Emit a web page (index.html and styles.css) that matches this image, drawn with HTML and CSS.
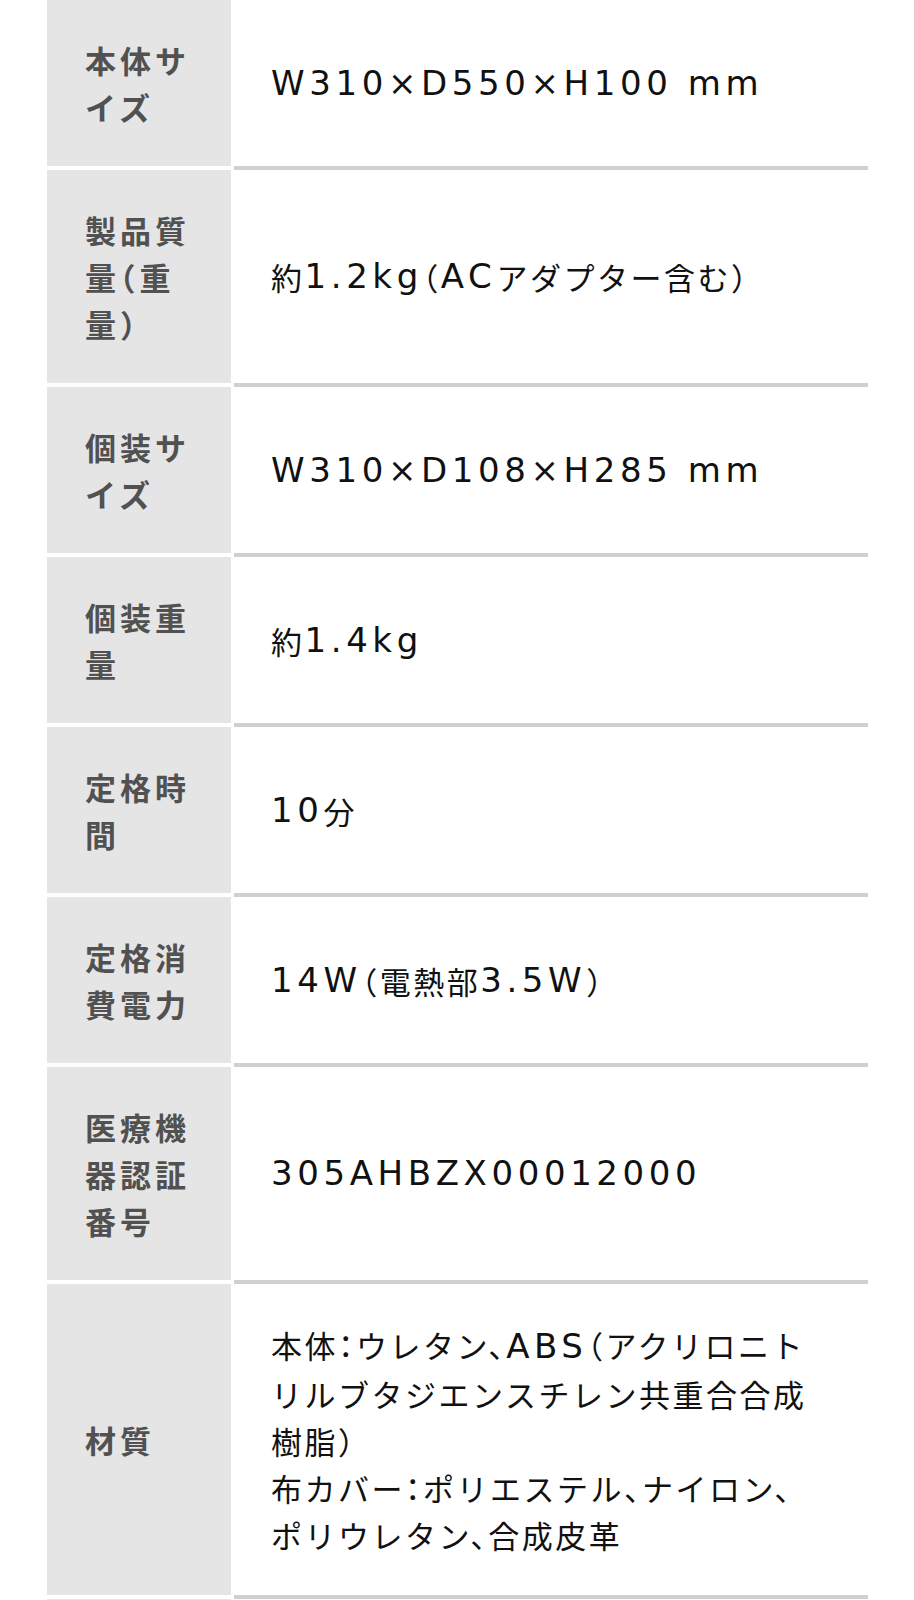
FILE: index.html
```html
<!DOCTYPE html>
<html lang="ja">
<head>
<meta charset="utf-8">
<title>仕様</title>
<link rel="stylesheet" href="styles.css">
</head>
<body>
<dl class="spec">
  <dt class="label">本体サイズ</dt>
  <dd class="value"><span class="en">W310×D550×H100 mm</span></dd>

  <dt class="label">製品質量（重量）</dt>
  <dd class="value">約<span class="en">1.2kg</span>（<span class="en">AC</span>アダプター含む）</dd>

  <dt class="label">個装サイズ</dt>
  <dd class="value"><span class="en">W310×D108×H285 mm</span></dd>

  <dt class="label">個装重量</dt>
  <dd class="value">約<span class="en">1.4kg</span></dd>

  <dt class="label">定格時間</dt>
  <dd class="value"><span class="en">10</span>分</dd>

  <dt class="label">定格消費電力</dt>
  <dd class="value"><span class="en">14W</span>（電熱部<span class="en">3.5W</span>）</dd>

  <dt class="label">医療機器認証番号</dt>
  <dd class="value"><span class="en">305AHBZX00012000</span></dd>

  <dt class="label">材質</dt>
  <dd class="value"><p class="multi">本体：ウレタン、<span class="en">ABS</span>（アクリロニトリルブタジエンスチレン共重合合成樹脂）<br>布カバー：ポリエステル、ナイロン、ポリウレタン、合成皮革</p></dd>

  <dt class="label empty"></dt>
  <dd class="value empty"></dd>
</dl>
</body>
</html>
```
FILE: styles.css
```css
html, body {
  margin: 0;
  padding: 0;
  background: #ffffff;
}

body {
  padding: 0 46px 0 47px;
}

.spec {
  display: grid;
  grid-template-columns: 184px 1fr;
  column-gap: 3px;
  margin: 0;
}

.label {
  display: flex;
  align-items: center;
  box-sizing: border-box;
  margin: 0;
  padding: 36px 37px 36px 38px;
  background: #e5e5e5;
  border-bottom: 4px solid #ffffff;
  font-family: "Noto Sans CJK JP", sans-serif;
  font-weight: 700;
  font-size: 31px;
  line-height: 47px;
  letter-spacing: 4px;
  color: #515151;
  font-feature-settings: "halt";
}

.value {
  display: flex;
  align-items: center;
  box-sizing: border-box;
  margin: 0;
  padding: 37px 52px 37px 37px;
  border-bottom: 4px solid #d0d0d0;
  font-family: "Noto Sans CJK JP", sans-serif;
  font-weight: 400;
  font-size: 31px;
  line-height: 47px;
  letter-spacing: 2.5px;
  color: #111111;
  font-feature-settings: "halt";
}

.multi {
  margin: 0;
}

.en {
  font-family: "DejaVu Sans", sans-serif;
  font-size: 34px;
  line-height: 47px;
  letter-spacing: 4.6px;
}

.empty {
  min-height: 166px;
}
```
